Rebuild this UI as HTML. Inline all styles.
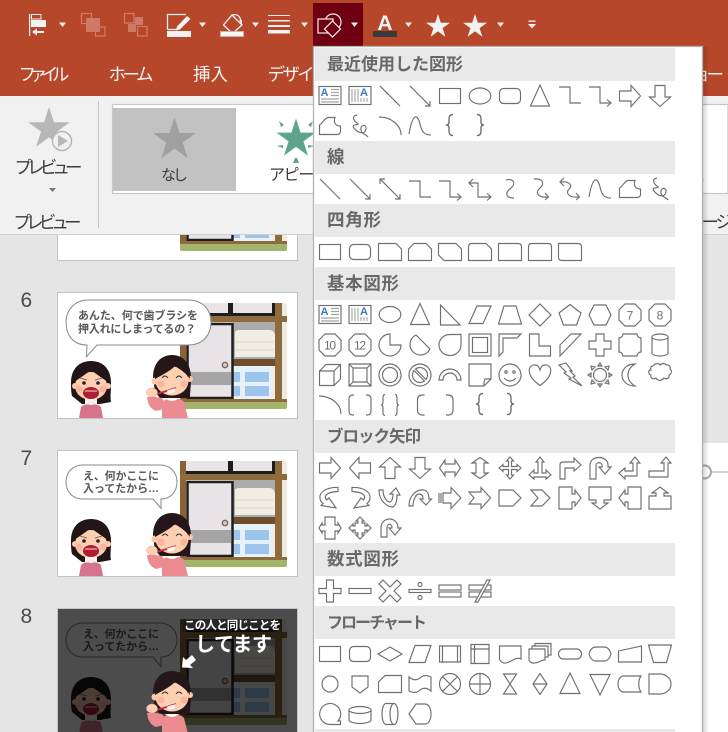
<!DOCTYPE html>
<html lang="ja"><head><meta charset="utf-8"><title>Shapes</title>
<style>
html,body{margin:0;padding:0;background:#e5e5e5;overflow:hidden}
svg{display:block}
text{font-family:"Liberation Sans","Noto Sans CJK JP",sans-serif}
.i{fill:none;stroke:#6f6f6f;stroke-width:1.15}
.i text{stroke:none;fill:#6f6f6f}
.h{font-size:17px;font-weight:700;fill:#686868}
.w{fill:#f2f2f2;font-size:17.5px}
.d{fill:#3c3c3c;font-size:17.5px}
.b{fill:#585858;font-size:11px;font-weight:700}
.n{fill:#4a4a4a;font-size:21px}
</style></head><body>
<svg xmlns="http://www.w3.org/2000/svg" width="728" height="732" viewBox="0 0 728 732">
<defs>
<polygon id="star" points="0,-10 2.25,-3.09 9.51,-3.09 3.63,1.18 5.88,8.09 0,3.82 -5.88,8.09 -3.63,1.18 -9.51,-3.09 -2.25,-3.09"/>
<g id="tb"><rect x="-11" y="-9.500" width="22" height="18"/><path stroke="#a5a5a5" d="M1,-6.500H9M1,-3.500H9M1,-.5H9M-9,3H9M-9,6H9"/><text x="-9.500" y="0" font-size="11" font-weight="700" style="fill:#3b79c3;stroke:none">A</text></g>
<g id="vtb"><rect x="-11" y="-9.500" width="22" height="18"/><path stroke="#a5a5a5" d="M-8,-7V6M-5,-7V6M-2,-7V6M1,2V6M4,2V6M7,2V6"/><text x="0" y="0" font-size="11" font-weight="700" style="fill:#3b79c3;stroke:none">A</text></g>
<path id="ln" d="M-10,-10L10,10"/>
<path id="lna" d="M-10,-10L10,10M10,5V10H5"/>
<path id="lnd" d="M-10,-10L10,10M10,5V10H5M-10,-5V-10H-5"/>
<path id="elb" d="M-11,-8H0V8H11"/>
<path id="elba" d="M-11,-8H0V8H10.500M7,4.500L11,8L7,11.500"/>
<path id="elbd" d="M-10.500,-6H-2V8H10.500M-7,-10L-11,-6L-7,-2M7,4.500L11,8L7,11.500"/>
<path id="crv" d="M-4,-9C4,-11 6,-5 1,-1C-5,3 -5,9 4,9"/>
<path id="crva" d="M-6,-10C3,-11 5,-5 0,-1C-5,3 -3,9 8,8M5,4L8.500,8L5,11"/>
<path id="crvd" d="M-9,-7C0,-8 3,-3 -1,0C-5,4 -1,9 9,8M-6,-11L-10,-7L-6,-3M6,4L9.500,8L6,11"/>
<path id="scv" d="M-11,8C-7,-15 -2,-11 0,-2C2,7 5,9 11,9"/>
<path id="free" d="M-10.500,8.500V-1C-7,-3 -5,-8.500 -2,-8.500H5C3,-3 6,0 10.500,0V5Q10.500,8.500 7,8.500Z"/>
<path id="scrib" d="M-3,-11C-9,-10 -6,-5 -3,-3C2,0 -10,-3 -6,2C-3,6 4,10 6,3C7,-2 0,-2 1,4C1,8 6,8 8,11"/>
<path id="arc" d="M-11,-9C1,-9 11,-1 11,9"/>
<path id="bl" d="M3,-10.500C0,-10.500 -1,-9 -1,-6V-3C-1,-1 -2,0 -4,0C-2,0 -1,1 -1,3V6C-1,9 0,10.500 3,10.500" stroke-width="1.400"/>
<path id="br" d="M-3,-10.500C0,-10.500 1,-9 1,-6V-3C1,-1 2,0 4,0C2,0 1,1 1,3V6C1,9 0,10.500 -3,10.500" stroke-width="1.400"/>
<rect id="rc" x="-10.500" y="-7.500" width="21" height="15"/>
<rect id="rr" x="-10.500" y="-7.500" width="21" height="15" rx="4"/>
<ellipse id="el" rx="10.800" ry="8"/>
<path id="tri" d="M-9.500,10L0,-11L9.500,10Z"/>
<path id="ar" d="M-10.500,-5H1V-10.500L10.500,0L1,10.500V5H-10.500Z"/>
<path id="s1" d="M-11.500,-8.500H6L11.500,-3V8.500H-11.500Z"/>
<path id="s2" d="M-6,-8.500H6L11.500,-3V8.500H-11.500V-3Z"/>
<path id="s3" d="M-11.500,-8.500H6L11.500,-3V8.500H-6L-11.500,3Z"/>
<path id="s4" d="M-8,-8.500H6L11.500,-3V8.500H-11.500V-5Q-11.500,-8.500 -8,-8.500Z"/>
<path id="s5" d="M-11.500,-8.500H8Q11.500,-8.500 11.500,-5V8.500H-11.500Z"/>
<path id="s6" d="M-8,-8.500H8Q11.500,-8.500 11.500,-5V8.500H-11.500V-5Q-11.500,-8.500 -8,-8.500Z"/>
<path id="s7" d="M-11.500,-8.500H8Q11.500,-8.500 11.500,-5V8.500H-8Q-11.500,8.500 -11.500,5Z"/>
<path id="rtri" d="M-9.500,-10L10,10H-9.500Z"/>
<path id="para" d="M-11,8.500L-3,-9H11L3,8.500Z"/>
<path id="trap" d="M-11.500,9L-6,-9H6L11.500,9Z"/>
<path id="dia" d="M-11,0L0,-11L11,0L0,11Z"/>
<path id="pent" d="M0,-10.500L11,-2L6.500,10H-6.500L-11,-2Z"/>
<path id="hex" d="M-11,0L-6,-10H6L11,0L6,10H-6Z"/>
<path id="oct" d="M-5,-11H5L11,-5V5L5,11H-5L-11,5V-5Z"/>
<path id="pie" d="M0,-11A11,11 0 1 0 11,0H0Z"/>
<path id="chord" d="M-4,-10L10,4A10.500,10.500 0 1 1 -4,-10Z"/>
<path id="tear" d="M11,-10.500V0A11,10.500 0 1 1 0,-10.500Z"/>
<g id="frm"><rect x="-11" y="-11" width="22" height="22"/><rect x="-7.500" y="-7.500" width="15" height="15"/></g>
<path id="hfrm" d="M-11,11V-11H11L7,-7H-7V7Z"/>
<path id="ell" d="M-10.500,-11H-1V1H10.500V11H-10.500Z"/>
<path id="stripe" d="M-10,0L1,-11H11L-10,11Z"/>
<path id="plus" d="M-4,-11H4V-4H11V4H4V11H-4V4H-11V-4H-4Z"/>
<path id="plq" d="M-7,-11H7A4,4 0 0 0 11,-7V7A4,4 0 0 0 7,11H-7A4,4 0 0 0 -11,7V-7A4,4 0 0 0 -7,-11Z"/>
<path id="cyl" d="M-8,-8A8,3 0 0 1 8,-8V8A8,3 0 0 1 -8,8ZM-8,-8A8,3 0 0 0 8,-8"/>
<path id="cube" d="M-10.500,-4L-4,-10.500H10.500V4L4,10.500H-10.500ZM-10.500,-4H4V10.500M4,-4L10.500,-10.500"/>
<path id="bev" d="M-11,-11H11V11H-11ZM-7,-7H7V7H-7ZM-11,-11L-7,-7M11,-11L7,-7M11,11L7,7M-11,11L-7,7"/>
<g id="dnt"><circle r="11"/><circle r="7.500"/></g>
<g id="no"><circle r="11"/><path d="M-4.500,-6A7.500,7.500 0 0 1 6,4.500ZM4.500,6A7.500,7.500 0 0 1 -6,-4.500Z"/></g>
<path id="barc" d="M-11,5A11,11 0 0 1 11,5H7A7,7 0 0 0 -7,5Z"/>
<path id="fold" d="M-11,-11H11V4L4,11H-11ZM11,4H5Q4,4 4,11"/>
<g id="smile"><circle r="11"/><circle cx="-4" cy="-3" r="1.200"/><circle cx="4" cy="-3" r="1.200"/><path d="M-6,3Q0,9 6,3"/></g>
<path id="heart" d="M0,10.500C-16,-1 -11,-11 -5,-10C-2,-10 -1,-8 0,-5C1,-8 2,-10 5,-10C11,-11 16,-1 0,10.500Z"/>
<path id="bolt" d="M-11,-10L-4,-12L2,-4L0,-4L5,1L3,2L12,11L-1,4L1,3L-6,-2L-4,-3Z"/>
<g id="sun"><circle r="6.500"/><path d="M-2,-9L0,-12L2,-9ZM-2,9L0,12L2,9ZM-9,-2L-12,0L-9,2ZM9,-2L12,0L9,2ZM-8,-5L-9,-9L-5,-8ZM8,-5L9,-9L5,-8ZM-8,5L-9,9L-5,8ZM8,5L9,9L5,8Z"/></g>
<path id="moon" d="M5,-11C-5,-11 -8,-4 -8,0C-8,6 -3,11 5,11C0,8 -2,4 -2,0C-2,-4 0,-8 5,-11Z"/>
<path id="cloud" d="M-7,-7C-5,-10 -1,-10 0,-8C2,-10 5,-10 6,-8C9,-9 11,-6 10,-4C12,-3 12,1 9,2C10,5 6,7 4,5C2,8 -3,8 -4,5C-7,7 -10,5 -9,2C-12,1 -12,-3 -9,-3C-10,-5 -9,-7 -7,-7Z"/>
<path id="bkp" d="M-6,-10H-7Q-11,-10 -11,-6V6Q-11,10 -7,10H-6M6,-10H7Q11,-10 11,-6V6Q11,10 7,10H6"/>
<path id="brp" d="M-5,-10.500Q-7,-10.500 -7,-7V-3Q-7,0 -9,0Q-7,0 -7,3V7Q-7,10.500 -5,10.500M5,-10.500Q7,-10.500 7,-7V-3Q7,0 9,0Q7,0 7,3V7Q7,10.500 5,10.500"/>
<path id="lb" d="M4,-10H2Q-3,-10 -3,-5V5Q-3,10 2,10H4"/>
<path id="rb" d="M-4,-10H-2Q3,-10 3,-5V5Q3,10 -2,10H-4"/>
<path id="lra" d="M-10.500,0L-5,-8V-4H5V-8L10.500,0L5,8V4H-5V8Z"/>
<path id="quad" d="M0,-11L3.500,-7H1.500V-1.500H7V-3.500L11,0L7,3.500V1.500H1.500V7H3.500L0,11L-3.500,7H-1.500V1.500H-7V3.500L-11,0L-7,-3.500V-1.500H-1.500V-7H-3.500Z"/>
<path id="lru" d="M0,-11L4,-6H2V5H6V2L11,7L6,11V9H-6V11L-11,7L-6,2V5H-2V-6H-4Z"/>
<path id="bent" d="M-10,11V-3Q-10,-6 -7,-6H4V-10L11,-3L4,3V0H-5V11Z"/>
<path id="utn" d="M-10,11V-3C-10,-13 8,-13 8,-3V-1H11L5,6L-1,-1H2V-3C2,-6 -4,-6 -4,-3V11Z"/>
<path id="lua" d="M-11,5L-5,0V3H3V-5H0L5,-11L10,-5H7V8H-5V11Z"/>
<path id="bup" d="M-11,3H4V-5H1L6,-11L11,-5H8V9H-11Z"/>
<path id="cvr" d="M8,-10.500C-3,-11 -11,-6 -10,0C-10,2 -9,4 -7,5.500L-9,7.500L6,10L-1,0L-3.500,2C-6,-1 -5,-6 8,-6.500Z"/>
<path id="cvu" d="M-11,-8C-11,3 -3,9 3,9C6,7 7,2 7,-3H10L6,-10L0,-4H3C3,0 2,3 0,4C-4,4 -7,-2 -7,-8Z"/>
<path id="cvd" d="M-11,8C-11,-3 -3,-9 4,-8C8,-7 9,-3 9,1H11.500L6,7L0,1H3C3,-2 2,-4 -1,-4C-4,-4 -7,2 -7,8Z"/>
<path id="sra" d="M-11,-5V5M-9,-5V5M-7,-5H1V-10.500L11,0L1,10.500V5H-7Z"/>
<path id="nra" d="M-11,-6H1V-10.500L10.500,0L1,10.500V6H-11L-6,0Z"/>
<path id="pnt" d="M-11,-8H3L11,0L3,8H-11Z"/>
<path id="chv" d="M-9,-8H2L10,0L2,8H-9L-2,0Z"/>
<path id="cal" d="M-11,-11H2V-4H5V-8L11,0L5,8V4H2V11H-11Z"/>
<path id="lrc" d="M-5,-11H5V-3H8V-5L11,0L8,5V3H5V11H-5V3H-8V5L-11,0L-8,-5V-3H-5Z"/>
<path id="qc" d="M0,-11L4,-7H2V-5H5V-2H7V-4L11,0L7,4V2H5V5H2V7H4L0,11L-4,7H-2V5H-5V2H-7V4L-11,0L-7,-4V-2H-5V-5H-2V-7H-4Z"/>
<path id="circ" d="M-9,9V0C-9,-12 8,-12 8,0H11L5,7L-1,0H2C2,-5 -3,-5 -3,0V9Z"/>
<path id="mp" d="M-3.500,-11H3.500V-2.500H11V2.500H3.500V11H-3.500V2.500H-11V-2.500H-3.500Z"/>
<rect id="mm" x="-11" y="-2.500" width="22" height="5"/>
<path id="mx" d="M-7,-11L0,-4L7,-11L11,-7L4,0L11,7L7,11L0,4L-7,11L-11,7L-4,0L-11,-7Z"/>
<g id="mdv"><rect x="-11" y="-1.500" width="22" height="3"/><circle cy="-6.500" r="2"/><circle cy="6.500" r="2"/></g>
<g id="meq"><rect x="-11" y="-6" width="22" height="5"/><rect x="-11" y="1" width="22" height="5"/></g>
<g id="mne"><rect x="-11" y="-6" width="22" height="5"/><rect x="-11" y="1" width="22" height="5"/><path d="M-5,11L7,-11H10L-2,11Z" fill="#fff"/></g>
<path id="fdec" d="M-12,0L0,-7L12,0L0,7Z"/>
<path id="fdat" d="M-11,8.500L-5,-8.500H11L5,8.500Z"/>
<path id="fpre" d="M-10.500,-8H10.500V8H-10.500ZM-7.500,-8V8M7.500,-8V8"/>
<path id="fint" d="M-9,-9.500H9V9.500H-9ZM-5.500,-9.500V9.500M-9,-5H9"/>
<path id="fdoc" d="M-10.500,-8H11V5C5,2 0,10 -6,9C-8,9 -10.500,6 -10.500,5Z"/>
<path id="fmul" d="M-11,-5H5V6C2,5 -2,10 -7,9C-9,9 -11,7 -11,6ZM-8,-5V-8H8V3H5M-5,-8V-10.500H11V1H8"/>
<rect id="fter" x="-11.500" y="-5" width="23" height="10" rx="5"/>
<path id="fprp" d="M-11,0Q-9,-7 -4,-7H4Q9,-7 11,0Q9,7 4,7H-4Q-9,7 -11,0Z"/>
<path id="fmi" d="M-11.500,-3L11.500,-8V8H-11.500Z"/>
<path id="fmo" d="M-11.500,-9H11.500L6.500,8.500H-6.500Z"/>
<circle id="fcon" r="8"/>
<path id="foff" d="M-8,-8H8V3L0,9L-8,3Z"/>
<path id="fcrd" d="M-5,-8.500H11.500V8.500H-11.500V-2Z"/>
<path id="ftap" d="M-11,-7C-6,-3 -3,-4 0,-6C3,-9 7,-9 11,-7V7C6,3 3,4 0,6C-3,9 -7,9 -11,7Z"/>
<g id="fsum"><circle r="10.500"/><path d="M-7.400,-7.400L7.400,7.400M7.400,-7.400L-7.400,7.400"/></g>
<g id="for"><circle r="10.500"/><path d="M-10.500,0H10.500M0,-10.500V10.500"/></g>
<path id="fcol" d="M-6.500,-10H6.500L-6.500,10H6.500Z"/>
<path id="fsrt" d="M0,-10.500L7,0L0,10.500L-7,0ZM-7,0H7"/>
<path id="fext" d="M-10,9.500L0,-11L10,9.500Z"/>
<path id="fmrg" d="M-10,-9.500L0,11L10,-9.500Z"/>
<path id="fsto" d="M-6,-8H11C8,-4 8,4 11,8H-6C-10,8 -12,4 -12,0C-12,-4 -10,-8 -6,-8Z"/>
<path id="fdel" d="M-11,-10H0A11,10 0 0 1 0,10H-11Z"/>
<path id="fseq" d="M0,10.500A10.500,10.500 0 1 1 8,7H10.500V10.500Z"/>
<path id="fdsk" d="M-11,-4A11,3.500 0 0 1 11,-4V6A11,3.500 0 0 1 -11,6ZM-11,-4A11,3.500 0 0 0 11,-4"/>
<path id="fdir" d="M-4,-10.500H4A4,10.500 0 0 1 4,10.500H-4A4,10.500 0 0 1 -4,-10.500ZM4,-10.500A4,10.500 0 0 0 4,10.500"/>
<path id="fdsp" d="M-11,0L-4,-10H5C9,-10 11,-5 11,0C11,5 9,10 5,10H-4Z"/>

<g id="room">
<rect x="180" y="303" width="107" height="106" rx="2" fill="#efebe0"/>
<rect x="186" y="303" width="90" height="12" fill="#e9e5e7"/>
<rect x="180" y="303" width="6" height="98" fill="#8b6237"/>
<rect x="186" y="313" width="89" height="3" fill="#1e1e1e"/>
<rect x="228" y="303" width="5" height="12" fill="#1e1e1e"/>
<rect x="272" y="303" width="3" height="12" fill="#1e1e1e"/>
<rect x="233" y="322" width="42" height="44" fill="#acacac"/>
<path d="M235,332Q236,330 240,330H270Q275,331 275,336V357H235Z" fill="#f0ede4"/>
<path d="M235,342H274M235,350H274" stroke="#dcd8cc" stroke-width="1"/>
<rect x="233" y="359" width="42" height="7" fill="#6e4d2c"/>
<rect x="233" y="366" width="39" height="34" fill="#e6f1fa"/>
<rect x="245" y="372" width="24" height="10" fill="#9cc4ec"/>
<rect x="245" y="386" width="24" height="10" fill="#9cc4ec"/>
<rect x="233" y="372" width="7" height="10" fill="#9cc4ec"/>
<rect x="233" y="386" width="7" height="10" fill="#9cc4ec"/>
<rect x="275" y="303" width="7" height="98" fill="#8e6b3c"/>
<rect x="180" y="316" width="107" height="6" fill="#8e6b3c"/>
<rect x="187.500" y="324" width="45" height="74" fill="#e8e3e6" stroke="#1e1e1e" stroke-width="2.500"/>
<rect x="189" y="372" width="42" height="13" fill="#a5a5a5"/>
<circle cx="225" cy="365" r="2.600" fill="#d8cfc8" stroke="#7d6a58" stroke-width="1.500"/>
<rect x="180" y="399" width="107" height="3" fill="#8e6b3c"/>
<path d="M180,402H287V407Q287,409 285,409H182Q180,409 180,407Z" fill="#a3b46b"/>
</g>
<g id="girl">
<path d="M71,383C71,368 80,361 91,361C102,361 111,368 111,383C111,392 110,398 111,402L100,404H82L72,396C71,392 71,388 71,383Z" fill="#211518"/>
<ellipse cx="91" cy="386" rx="16" ry="14" fill="#fdd0b2"/>
<circle cx="75" cy="386" r="3" fill="#fdc7a8"/>
<circle cx="108" cy="386" r="3" fill="#fdc7a8"/>
<path d="M74,382C76,372 84,366 91,366C98,366 106,372 108,382C102,378 96,374 91,370C86,374 80,378 74,382Z" fill="#211518"/>
<circle cx="84" cy="383" r="1.800" fill="#222"/>
<circle cx="98" cy="383" r="1.800" fill="#222"/>
<path d="M80,378L87,380M102,378L95,380" stroke="#8a6a5a" stroke-width="1"/>
<circle cx="79" cy="389" r="3.500" fill="#fbb4a0"/>
<circle cx="103" cy="389" r="3.500" fill="#fbb4a0"/>
<ellipse cx="91" cy="393" rx="8" ry="6" fill="#b01c30"/>
<path d="M85,391H97" stroke="#f4dcd8" stroke-width="1"/>
<rect x="85" y="399" width="12" height="5" fill="#f2f2ea"/>
<path d="M79,418L81,407Q85,403 91,405Q97,403 101,407L103,418Z" fill="#d8738c"/>
</g>
<g id="person">
<path d="M153,378C153,362 162,355 172,355C183,355 191,363 191,378C191,386 190,392 190,398L184,398H160L155,392Z" fill="#241619"/>
<ellipse cx="172" cy="381" rx="16.500" ry="14.500" fill="#fdd0b2"/>
<circle cx="155" cy="381" r="3.500" fill="#fdc7a8"/>
<circle cx="190" cy="379" r="3" fill="#fdc7a8"/>
<path d="M155,379C155,364 164,358 172,358C181,358 189,364 190,379C186,373 181,370 175,366C170,371 162,375 155,379Z" fill="#241619"/>
<path d="M162,378Q165,374 168,378M176,378Q179,374 182,378" fill="none" stroke="#333" stroke-width="1"/>
<circle cx="161" cy="384" r="3.500" fill="#fbb4a0"/>
<circle cx="184" cy="384" r="3.500" fill="#fbb4a0"/>
<path d="M162,418L162,403Q166,397 172,400Q180,397 184,402L188,418Z" fill="#ec8b90"/>
<path d="M147,397Q148,408 156,411L168,408L162,398L156,397Z" fill="#ec8b90"/>
<path d="M165,398Q172,404 179,398Z" fill="#fafaf2"/>
<path d="M157,394L176,388" stroke="#d0283c" stroke-width="1.800"/>
<path d="M167,390.500L176,388L174,392.500L168,394Z" fill="#f6f6f6"/>
<ellipse cx="152" cy="392.500" rx="5.500" ry="4.500" fill="#fdd0b2" stroke="#e6a98c" stroke-width=".5"/>
</g>
<g id="bub7">
<path d="M153,499L161,508.500L161,499C170,499 177,492 177,482C177,472 170,465 160,465H83C73,465 66,472 66,482C66,492 73,499 83,499Z" fill="#fff" stroke="#8a8a8a" stroke-width="1"/>
<text class="b" x="83" y="479.500" textLength="76">え、何かここに</text>
<text class="b" x="83" y="492" textLength="76">入ってたから…</text>
</g>
<linearGradient id="sh" x1="0" x2="1" y1="0" y2="0"><stop offset="0" stop-color="#000" stop-opacity=".16"/><stop offset="1" stop-color="#000" stop-opacity="0"/></linearGradient>
</defs>

<!-- slide panel -->
<rect width="728" height="732" fill="#e5e5e5"/>
<rect x="690" y="443" width="38" height="289" fill="#fff"/>
<path d="M703,472H728" stroke="#a8a8a8" stroke-width="1"/>
<circle cx="704.500" cy="472" r="6.500" fill="#fff" stroke="#a5a5a5" stroke-width="2"/>

<!-- slide 5 -->
<rect x="57.500" y="134.500" width="240" height="126" fill="#fff" stroke="#c4c4c4"/>
<use href="#room" transform="translate(0,-158)"/>

<!-- slide 6 -->
<text class="n" x="20.500" y="307">6</text>
<rect x="57.500" y="292.500" width="240" height="126" fill="#fff" stroke="#c4c4c4"/>
<use href="#room"/>
<use href="#girl"/>
<use href="#person"/>
<path d="M87,345L86.500,356.700L97,345H188C203,345 211,335 211,322C211,310 203,300 188,300H88C75,300 66,310 66,322C66,335 73,345 87,345Z" fill="#fff" stroke="#8a8a8a" stroke-width="1"/>
<text class="b" x="78" y="319" textLength="120">あんた、何で歯ブラシを</text>
<text class="b" x="78" y="332.500" textLength="118">押入れにしまってるの？</text>

<!-- slide 7 -->
<text class="n" x="20.500" y="465">7</text>
<rect x="57.500" y="450.500" width="240" height="126" fill="#fff" stroke="#c4c4c4"/>
<use href="#room" transform="translate(0,158)"/>
<use href="#girl" transform="translate(0,158)"/>
<use href="#person" transform="translate(0,158)"/>
<use href="#bub7"/>

<!-- slide 8 -->
<text class="n" x="20.500" y="623">8</text>
<rect x="57.500" y="608.500" width="240" height="126" fill="#fff" stroke="#c4c4c4"/>
<use href="#room" transform="translate(0,316)"/>
<use href="#girl" transform="translate(0,316)"/>
<use href="#bub7" transform="translate(0,158)"/>
<rect x="58" y="609" width="239" height="125" fill="#000" fill-opacity=".7"/>
<use href="#person" transform="translate(0,316)"/>
<rect x="183" y="619" width="99" height="12" fill="#111" fill-opacity=".55"/>
<text x="184" y="629" font-size="11.500" font-weight="700" fill="#fff" textLength="97">この人と同じことを</text>
<text x="195" y="651" font-size="20" font-weight="700" fill="#fff" textLength="77">してます</text>
<path d="M182,667.500L183,657L186,660L192,655L196,660L190,665L193,668Z" fill="#fff"/>

<!-- top bar -->
<rect width="728" height="96" fill="#b7472a"/>
<text class="w" x="18.500" y="80.500" textLength="51">ファイル</text>
<text class="w" x="108.500" y="80.500" textLength="45">ホーム</text>
<text class="w" x="193" y="80.500" textLength="35">挿入</text>
<text class="w" x="267.500" y="80.500" textLength="62">デザイン</text>
<text class="w" x="679" y="80.500" textLength="45">ショー</text>

<!-- QAT -->
<g fill="#f2f2f2">
<rect x="29" y="14" width="1.200" height="22"/>
<path d="M31.500,14.500H41V19H31.500Z" fill="none" stroke="#f2f2f2"/>
<rect x="31" y="20" width="15" height="7"/>
<path d="M32,32L37,28.500V31H44V33H37V35.500Z"/>
<path d="M167.500,29.500V14.500H186M167.500,29.500H177" fill="none" stroke="#f2f2f2" stroke-width="1.300"/>
<path d="M187,16L190.500,19L180,29.500L176,30.500L177,26.500Z"/>
<rect x="167" y="31" width="24" height="6"/>
<path d="M232,15L242,25L232.500,33.500L223.500,25Z" fill="none" stroke="#f2f2f2" stroke-width="1.300"/>
<path d="M232,15Q240,13 241,22" fill="none" stroke="#f2f2f2" stroke-width="1.300"/>
<path d="M239.500,20H242V25L240,23Z"/>
<rect x="220.500" y="31.500" width="23" height="5" fill="#f6f6f6" stroke="#c2b5ae"/>
<rect x="268" y="15" width="22" height="1"/>
<rect x="268" y="20" width="22" height="1.500"/>
<rect x="268" y="25" width="22" height="2"/>
<rect x="268" y="30" width="22" height="3.500"/>
<polygon points="59,22.500 66,22.500 62.500,27"/>
<polygon points="199,22.500 206,22.500 202.500,27"/>
<polygon points="252,22.500 259,22.500 255.500,27"/>
<polygon points="301,22.500 308,22.500 304.500,27"/>
<polygon points="405,22.500 412,22.500 408.500,27"/>
<polygon points="497,22.500 504,22.500 500.500,27"/>
<rect x="528.500" y="20.500" width="7" height="1.300"/>
<polygon points="528,24 536,24 532,28.500"/>
<use href="#star" transform="translate(438,26.600) scale(1.260)"/>
<use href="#star" transform="translate(475,26.600) scale(1.260)"/>
</g>
<g fill="none" stroke="#cf7f69" stroke-width="1.200">
<rect x="81.500" y="13.500" width="10" height="10"/>
<rect x="95.500" y="27" width="9.500" height="9"/>
<rect x="86" y="18" width="14" height="14" fill="#cf7a66" stroke="none"/>
<rect x="124.500" y="13.500" width="9.500" height="9.500"/>
<rect x="137.500" y="26.500" width="9.500" height="9.500"/>
<rect x="135" y="17" width="8" height="8" fill="#cf7a66" stroke="none"/>
<rect x="128" y="24" width="8" height="8" fill="#cf7a66" stroke="none"/>
</g>
<rect x="373" y="31" width="24" height="6" fill="#3a3a3a"/>
<text x="385" y="30" text-anchor="middle" font-size="21" font-weight="700" fill="#f2f2f2">A</text>

<!-- selected button -->
<rect x="313" y="3" width="50" height="43" fill="#6f0011"/>
<g fill="none" stroke="#f2f2f2" stroke-width="1.200">
<circle cx="333" cy="22" r="8"/>
<rect x="318" y="19" width="15" height="14" fill="#6f0011"/>
<path d="M332.500,21L340.500,29L332.500,37L324.500,29Z" fill="#6f0011"/>
</g>
<polygon points="351,22.500 358,22.500 354.500,27" fill="#f2f2f2"/>

<!-- ribbon -->
<rect y="96" width="728" height="138" fill="#f1f1f1"/>
<rect y="234" width="728" height="1" fill="#cfcfcf"/>
<rect x="98" y="101" width="1" height="127" fill="#c6c6c6"/>
<rect x="112.500" y="104.500" width="615.500" height="89" fill="#fff" stroke="#c8c8c8" stroke-width="1.200"/>
<rect x="113" y="108" width="123" height="83" fill="#c2c2c2"/>
<use href="#star" transform="translate(174.500,140) scale(2.250)" fill="#a0a0a0"/>
<text class="d" x="161" y="180" textLength="27" style="font-size:15px">なし</text>
<use href="#star" transform="translate(296,139) scale(2.050)" fill="#5fa58e"/>
<path d="M279,121L284,125L281,127ZM313,121L308,125L311,127ZM295,158L297,158L299,163H293ZM277,146L283,145L283,148ZM314,146L308,145L308,148Z" fill="#5fa58e"/>
<text class="d" x="269" y="180" textLength="60" style="font-size:16px">アピール</text>
<text class="d" x="701" y="180" style="font-size:12px">,</text>
<use href="#star" transform="translate(49,129) scale(2.200)" fill="#b7b7b7"/>
<circle cx="62" cy="141" r="9.500" fill="#f1f1f1" stroke="#b7b7b7" stroke-width="1.500"/>
<polygon points="58,135 58,147 68,141" fill="#b7b7b7"/>
<text class="d" x="14.500" y="173.500" textLength="68">プレビュー</text>
<polygon points="49,188 56,188 52.500,192" fill="#777"/>
<text class="d" x="13.500" y="228.500" textLength="68">プレビュー</text>
<text class="d" x="687" y="228" textLength="46">ページ</text>

<!-- menu -->
<rect x="703" y="47" width="6" height="685" fill="url(#sh)"/>
<rect x="313.500" y="46.500" width="389" height="690" fill="#fff" stroke="#b2b2b2" stroke-width="1.300"/>
<rect x="315" y="48" width="360" height="33" fill="#e9e9e9"/>
<rect x="315" y="141" width="360" height="33" fill="#e9e9e9"/>
<rect x="315" y="204" width="360" height="33" fill="#e9e9e9"/>
<rect x="315" y="267" width="360" height="33" fill="#e9e9e9"/>
<rect x="315" y="420" width="360" height="33" fill="#e9e9e9"/>
<rect x="315" y="543" width="360" height="33" fill="#e9e9e9"/>
<rect x="315" y="606" width="360" height="33" fill="#e9e9e9"/>
<rect x="315" y="729" width="360" height="3" fill="#e9e9e9"/>
<text class="h" x="327" y="70" textLength="136">最近使用した図形</text>
<text class="h" x="327" y="163" textLength="18" style="font-size:17.500px">線</text>
<text class="h" x="327" y="226" textLength="54" style="font-size:17.500px">四角形</text>
<text class="h" x="327" y="289.500" textLength="72" style="font-size:17.500px">基本図形</text>
<text class="h" x="327" y="442" textLength="94" style="font-size:16.500px">ブロック矢印</text>
<text class="h" x="327" y="565" textLength="72" style="font-size:17.500px">数式図形</text>
<text class="h" x="327" y="628" textLength="100" style="font-size:16px">フローチャート</text>

<g class="i">
<!-- recent -->
<use href="#tb" x="330" y="96"/><use href="#vtb" x="360" y="96"/><use href="#ln" x="390" y="96"/><use href="#lna" x="420" y="96"/><use href="#rc" x="450" y="96"/><use href="#el" x="480" y="96"/><use href="#rr" x="510" y="96"/><use href="#tri" x="540" y="96"/><use href="#elb" x="570" y="95"/><use href="#elba" x="600" y="95"/><use href="#ar" x="630" y="96"/><use href="#ar" transform="translate(660,96) rotate(90)"/>
<use href="#free" x="330" y="126"/><use href="#scrib" x="360" y="126"/><use href="#arc" x="390" y="126"/><use href="#scv" x="420" y="126"/><use href="#bl" x="450" y="125"/><use href="#br" x="480" y="125"/>
<!-- lines -->
<use href="#ln" x="330" y="189"/><use href="#lna" x="360" y="189"/><use href="#lnd" x="390" y="189"/><use href="#elb" x="420" y="189"/><use href="#elba" x="450" y="189"/><use href="#elbd" x="480" y="189"/><use href="#crv" x="510" y="189"/><use href="#crva" x="540" y="189"/><use href="#crvd" x="570" y="189"/><use href="#scv" x="600" y="189"/><use href="#free" x="630" y="189"/><use href="#scrib" x="660" y="189"/>
<!-- rects -->
<use href="#rc" x="330" y="252"/><use href="#rr" x="360" y="252"/><use href="#s1" x="390" y="252"/><use href="#s2" x="420" y="252"/><use href="#s3" x="450" y="252"/><use href="#s4" x="480" y="252"/><use href="#s5" x="510" y="252"/><use href="#s6" x="540" y="252"/><use href="#s7" x="570" y="252"/>
<!-- basic -->
<use href="#tb" x="330" y="315"/><use href="#vtb" x="360" y="315"/><use href="#el" x="390" y="314.500"/><use href="#tri" x="420" y="314.500"/><use href="#rtri" x="450" y="315"/><use href="#para" x="480" y="315"/><use href="#trap" x="510" y="315"/><use href="#dia" x="540" y="315"/><use href="#pent" x="570" y="315"/><use href="#hex" x="600" y="315"/><use href="#oct" x="630" y="315"/><text x="630" y="319.500" font-size="12" text-anchor="middle">7</text><use href="#oct" x="660" y="315"/><text x="660" y="319.500" font-size="12" text-anchor="middle">8</text>
<use href="#oct" x="330" y="345"/><text x="330" y="349.500" font-size="12" text-anchor="middle" textLength="12">10</text><use href="#oct" x="360" y="345"/><text x="360" y="349.500" font-size="12" text-anchor="middle" textLength="12">12</text><use href="#pie" x="390" y="345"/><use href="#chord" x="420" y="345"/><use href="#tear" x="450" y="345"/><use href="#frm" x="480" y="345"/><use href="#hfrm" x="510" y="345"/><use href="#ell" x="540" y="345"/><use href="#stripe" x="570" y="345"/><use href="#plus" x="600" y="345"/><use href="#plq" x="630" y="345"/><use href="#cyl" x="660" y="345"/>
<use href="#cube" x="330" y="375"/><use href="#bev" x="360" y="375"/><use href="#dnt" x="390" y="375"/><use href="#no" x="420" y="375"/><use href="#barc" x="450" y="375"/><use href="#fold" x="480" y="375"/><use href="#smile" x="510" y="375"/><use href="#heart" x="540" y="375"/><use href="#bolt" x="570" y="375"/><use href="#sun" x="600" y="375"/><use href="#moon" x="630" y="375"/><use href="#cloud" x="660" y="373"/>
<use href="#arc" x="330" y="405"/><use href="#bkp" x="360" y="405"/><use href="#brp" x="390" y="405"/><use href="#lb" x="420.500" y="405"/><use href="#rb" x="450" y="405"/><use href="#bl" x="480" y="404"/><use href="#br" x="510" y="404"/>
<!-- block -->
<use href="#ar" x="330" y="468"/><use href="#ar" transform="translate(360,468) rotate(180)"/><use href="#ar" transform="translate(390,468) rotate(-90)"/><use href="#ar" transform="translate(420,468) rotate(90)"/><use href="#lra" x="450" y="468"/><use href="#lra" transform="translate(480,468) rotate(90)"/><use href="#quad" x="510" y="468"/><use href="#lru" x="540" y="468"/><use href="#bent" x="570" y="468"/><use href="#utn" x="600" y="468"/><use href="#lua" x="630" y="468"/><use href="#bup" x="660" y="468"/>
<use href="#cvr" x="330" y="498"/><use href="#cvr" transform="translate(360,498) scale(-1,1)"/><use href="#cvu" x="390" y="498"/><use href="#cvd" x="420" y="498"/><use href="#sra" x="450" y="498"/><use href="#nra" x="480" y="498"/><use href="#pnt" x="510" y="498"/><use href="#chv" x="540" y="498"/><use href="#cal" x="570" y="498"/><use href="#cal" transform="translate(600,498) rotate(90)"/><use href="#cal" transform="translate(630,498) rotate(180)"/><use href="#cal" transform="translate(660,498) rotate(-90)"/>
<use href="#lrc" x="330" y="528"/><use href="#qc" x="360" y="528"/><use href="#circ" x="390" y="528"/>
<!-- math -->
<use href="#mp" x="330" y="591"/><use href="#mm" x="360" y="591"/><use href="#mx" x="390" y="591"/><use href="#mdv" x="420" y="591"/><use href="#meq" x="450" y="591"/><use href="#mne" x="480" y="591"/>
<!-- flow -->
<use href="#rc" x="330" y="654"/><use href="#rr" x="360" y="654"/><use href="#fdec" x="390" y="654"/><use href="#fdat" x="420" y="654"/><use href="#fpre" x="450" y="654"/><use href="#fint" x="480" y="654"/><use href="#fdoc" x="510" y="654"/><use href="#fmul" x="540" y="654"/><use href="#fter" x="570" y="654"/><use href="#fprp" x="600" y="654"/><use href="#fmi" x="630" y="654"/><use href="#fmo" x="660" y="654"/>
<use href="#fcon" x="330" y="684"/><use href="#foff" x="360" y="684"/><use href="#fcrd" x="390" y="684"/><use href="#ftap" x="420" y="684"/><use href="#fsum" x="450" y="684"/><use href="#for" x="480" y="684"/><use href="#fcol" x="510" y="684"/><use href="#fsrt" x="540" y="684"/><use href="#fext" x="570" y="684"/><use href="#fmrg" x="600" y="684"/><use href="#fsto" x="630" y="684"/><use href="#fdel" x="660" y="684"/>
<use href="#fseq" x="330" y="714"/><use href="#fdsk" x="360" y="714"/><use href="#fdir" x="390" y="714"/><use href="#fdsp" x="420" y="714"/>
</g>
</svg>
</body></html>
